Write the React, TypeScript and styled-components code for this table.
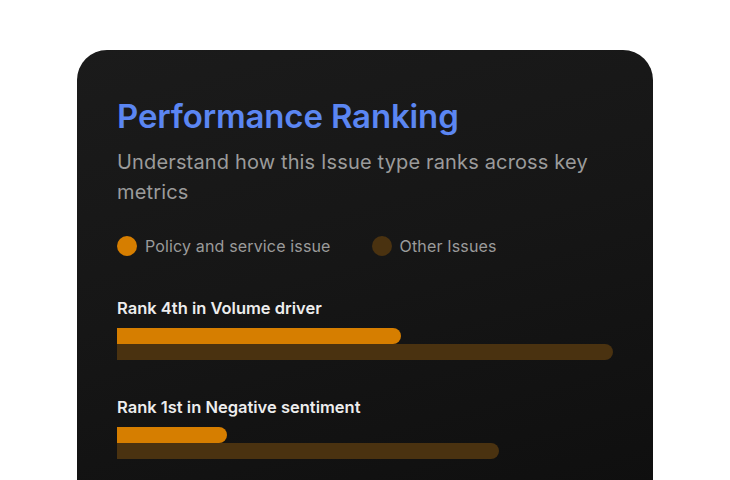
import styled, { createGlobalStyle } from "styled-components";

const Global = createGlobalStyle`
  html, body {
    margin: 0;
    padding: 0;
    background: #ffffff;
    font-family: Inter, "Noto Sans", sans-serif;
  }
`;

const Page = styled.div`
  width: 730px;
  height: 480px;
  overflow: hidden;
  padding: 50px 0 0 77px;
  box-sizing: border-box;
`;

const Card = styled.div`
  width: 576px;
  min-height: 480px;
  box-sizing: border-box;
  padding: 44px 40px 40px;
  border-radius: 30px;
  background: linear-gradient(165deg, #1b1b1b 0%, #161616 45%, #0e0e0e 100%);
  display: flex;
  flex-direction: column;
`;

const Title = styled.h1`
  margin: 0;
  font-size: 33px;
  line-height: 44px;
  font-weight: 600;
  color: #5b86f2;
  letter-spacing: -0.15px;
`;

const Subtitle = styled.p`
  margin: 9px 0 0;
  font-size: 20px;
  line-height: 30px;
  font-weight: 400;
  color: #9b9b9b;
  letter-spacing: 0.15px;
  max-width: 490px;
`;

const Legend = styled.div`
  display: flex;
  align-items: center;
  gap: 41px;
  margin-top: 29px;
`;

const LegendItem = styled.div`
  display: flex;
  align-items: center;
  gap: 8px;
  font-size: 16px;
  line-height: 20px;
  color: #9b9b9b;
  letter-spacing: 0.15px;
`;

const Dot = styled.span<{ $color: string }>`
  width: 20px;
  height: 20px;
  border-radius: 50%;
  background: ${(p) => p.$color};
`;

const Metrics = styled.div`
  display: flex;
  flex-direction: column;
  gap: 37px;
  margin-top: 42px;
`;

const Metric = styled.div`
  display: flex;
  flex-direction: column;
  gap: 10px;
`;

const Label = styled.div`
  font-size: 16.5px;
  line-height: 20px;
  font-weight: 600;
  color: #ededed;
`;

const Bars = styled.div`
  display: flex;
  flex-direction: column;
`;

const Bar = styled.div<{ $color: string }>`
  height: 16px;
  background: ${(p) => p.$color};
  border-radius: 0 8px 8px 0;
`;

const ORANGE = "#d67e00";
const BROWN = "#4a3210";

const metrics = [
  { label: "Rank 4th in Volume driver", mine: 284, other: 496 },
  { label: "Rank 1st in Negative sentiment", mine: 110, other: 382 },
];

export default function App() {
  return (
    <>
      <Global />
      <Page>
        <Card>
          <Title>Performance Ranking</Title>
          <Subtitle>Understand how this Issue type ranks across key metrics</Subtitle>
          <Legend>
            <LegendItem>
              <Dot $color={ORANGE} />
              Policy and service issue
            </LegendItem>
            <LegendItem>
              <Dot $color={BROWN} />
              Other Issues
            </LegendItem>
          </Legend>
          <Metrics>
            {metrics.map((m) => (
              <Metric key={m.label}>
                <Label>{m.label}</Label>
                <Bars>
                  <Bar $color={ORANGE} style={{ width: m.mine }} />
                  <Bar $color={BROWN} style={{ width: m.other }} />
                </Bars>
              </Metric>
            ))}
          </Metrics>
        </Card>
      </Page>
    </>
  );
}
